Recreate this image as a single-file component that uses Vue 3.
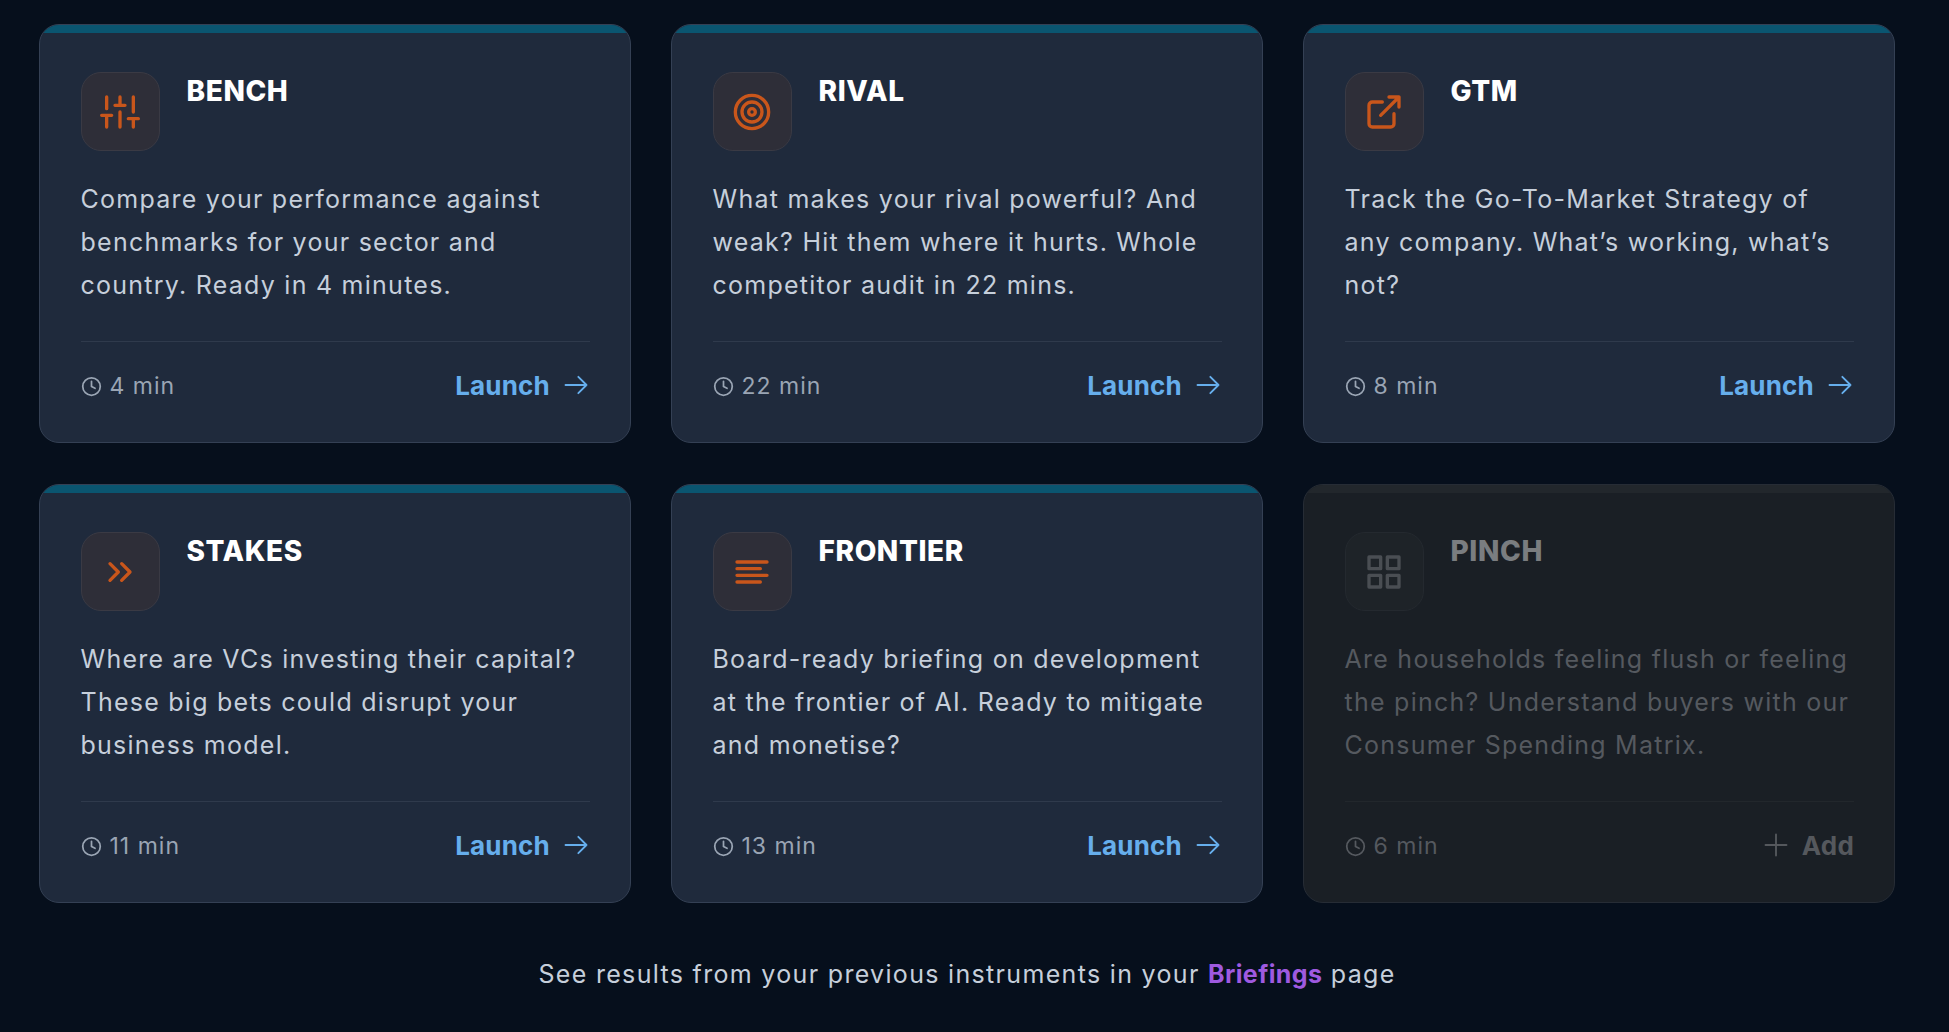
<template>
  <div class="page">
    <div class="grid">
      <div v-for="item in instruments" :key="item.name" class="card" :class="{ off: item.off }">
        <div class="bar"></div>
        <div class="inner">
          <div class="head">
            <div class="icon">
              <svg width="40" height="40" viewBox="0 0 24 24" v-html="item.icon"></svg>
            </div>
            <h3>{{ item.name }}</h3>
          </div>
          <p>{{ item.text }}</p>
          <div class="foot">
            <span class="time">
              <svg width="21" height="21" viewBox="0 0 24 24"><circle cx="12" cy="12" r="10" /><path d="M12 6v6l4 2" /></svg>
              {{ item.time }}
            </span>
            <span v-if="item.off" class="action">
              <svg class="plus" width="28" height="28" viewBox="0 0 24 24"><path d="M12 3v18M3 12h18" /></svg>
              Add
            </span>
            <span v-else class="action">
              Launch
              <svg class="arrow" width="28" height="28" viewBox="0 0 24 24"><path d="M3 12h18M14 5l7 7-7 7" /></svg>
            </span>
          </div>
        </div>
      </div>
    </div>
    <div class="note">See results from your previous instruments in your <b>Briefings</b> page</div>
  </div>
</template>

<script setup>
// icon bodies on a 24 grid, stroke comes from the css
const instruments = [
  {
    name: 'BENCH',
    text: 'Compare your performance against benchmarks for your sector and country. Ready in 4 minutes.',
    time: '4 min',
    icon: '<path d="M4 21v-7M4 10V3M12 21v-9M12 8V3M20 21v-5M20 12V3M1 14h6M9 8h6M17 16h6" />'
  },
  {
    name: 'RIVAL',
    text: 'What makes your rival powerful? And weak? Hit them where it hurts. Whole competitor audit in 22 mins.',
    time: '22 min',
    icon: '<circle cx="12" cy="12" r="10" /><circle cx="12" cy="12" r="6" /><circle cx="12" cy="12" r="2" />'
  },
  {
    name: 'GTM',
    text: 'Track the Go-To-Market Strategy of any company. What’s working, what’s not?',
    time: '8 min',
    icon: '<path d="M18 13v6a2 2 0 0 1-2 2H5a2 2 0 0 1-2-2V8a2 2 0 0 1 2-2h6M15 3h6v6M10 14 21 3" />'
  },
  {
    name: 'STAKES',
    text: 'Where are VCs investing their capital? These big bets could disrupt your business model.',
    time: '11 min',
    icon: '<path d="m13 17 5-5-5-5M6 17l5-5-5-5" />'
  },
  {
    name: 'FRONTIER',
    text: 'Board-ready briefing on development at the frontier of AI. Ready to mitigate and monetise?',
    time: '13 min',
    icon: '<path d="M21 6H3M17 10H3M21 14H3M17 18H3" />'
  },
  {
    name: 'PINCH',
    text: 'Are households feeling flush or feeling the pinch? Understand buyers with our Consumer Spending Matrix.',
    time: '6 min',
    off: true,
    icon: '<rect x="3" y="3" width="7" height="7" /><rect x="14" y="3" width="7" height="7" /><rect x="14" y="14" width="7" height="7" /><rect x="3" y="14" width="7" height="7" />'
  }
]
</script>

<style>
html, body {
  background: #060f1c;
}
</style>

<style scoped>
.page {
  height: 1032px;
  overflow: hidden;
  box-sizing: border-box;
  padding: 24px 54px 0 39px;
  background: #060f1c;
  font-family: Inter, "Noto Sans", sans-serif;
}

.grid {
  display: grid;
  grid-template-columns: repeat(3, 1fr);
  column-gap: 40px;
  row-gap: 41px;
}

.card {
  height: 419px;
  box-sizing: border-box;
  border: 1px solid #344054;
  border-radius: 20px;
  overflow: hidden;
  background: #1f2a3c;
}

.bar {
  height: 8px;
  background: #0a5570;
}

.inner {
  padding: 39px 40px 0 40.5px;
}

.head {
  display: flex;
  gap: 27px;
  height: 80px;
}

.icon {
  width: 79px;
  height: 79px;
  box-sizing: border-box;
  display: flex;
  align-items: center;
  justify-content: center;
  border: 1px solid #3a3a44;
  border-radius: 20px;
  background: #2e2e38;
}

.icon svg {
  fill: none;
  stroke: #c9561b;
  stroke-width: 2;
  stroke-linecap: round;
  stroke-linejoin: round;
}

h3 {
  margin: 2px 0 0;
  font-size: 28px;
  line-height: 34px;
  font-weight: 800;
  letter-spacing: 0.6px;
  color: #fff;
}

p {
  margin: 26px 0 0;
  height: 130px;
  font-size: 25px;
  line-height: 43px;
  letter-spacing: 1.25px;
  color: #c6cfdb;
}

.foot {
  margin-top: 33px;
  padding-top: 24px;
  display: flex;
  align-items: center;
  justify-content: space-between;
  border-top: 1px solid #2f3a4c;
  height: 40px;
}

.time {
  display: flex;
  align-items: center;
  gap: 8px;
  font-size: 23px;
  letter-spacing: 1px;
  color: #9aa5b4;
}

.time svg {
  fill: none;
  stroke: currentColor;
  stroke-width: 2;
  stroke-linecap: round;
  stroke-linejoin: round;
}

.action {
  display: flex;
  align-items: center;
  gap: 12px;
  margin-top: -2px;
  font-size: 26px;
  font-weight: 700;
  letter-spacing: 0.2px;
  color: #66aeec;
}

.action svg {
  fill: none;
  stroke: currentColor;
  stroke-width: 1.6;
  stroke-linecap: round;
  stroke-linejoin: round;
}

.off {
  border-color: #262c35;
  background: #1a1f25;
}

.off .bar {
  background: #22272c;
}

.off .icon {
  border-color: #24292f;
  background: #1e2328;
}

.off .icon svg {
  stroke: #4a4e53;
}

.off h3 {
  color: #7a7d80;
}

.off p {
  color: #55595f;
}

.off .foot {
  border-color: #22272c;
}

.off .time {
  color: #55595f;
}

.off .action {
  color: #55585d;
}

.note {
  margin-top: 55px;
  text-align: center;
  font-size: 25px;
  line-height: 32px;
  letter-spacing: 1.32px;
  color: #c6cfdb;
}

.note b {
  font-weight: 700;
  letter-spacing: 0.4px;
  color: #9f5ae0;
}
</style>
